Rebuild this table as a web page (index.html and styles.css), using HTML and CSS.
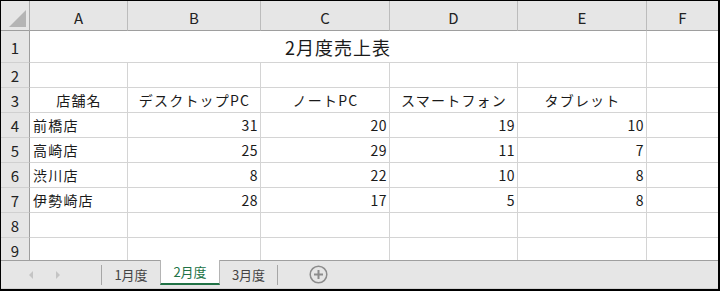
FILE: index.html
```html
<!DOCTYPE html>
<html lang="ja">
<head>
  <meta charset="UTF-8" />
  <title>2月度売上表</title>
  <link rel="stylesheet" href="styles.css">
</head>
<body>

<div class="book">

  <!-- Sheet grid -->
  <div class="sheet">
    <div class="corner">
      <svg width="17" height="17" viewBox="0 0 17 17"><polygon points="17,0 17,17 0,17" fill="#b4b4b4"/></svg>
    </div>
    <div class="col-head">A</div>
    <div class="col-head">B</div>
    <div class="col-head">C</div>
    <div class="col-head">D</div>
    <div class="col-head">E</div>
    <div class="col-head">F</div>

    <div class="row-head">1</div>
    <div class="cell title">2月度売上表</div>
    <div class="cell"></div>

    <div class="row-head">2</div>
    <div class="cell"></div><div class="cell"></div><div class="cell"></div>
    <div class="cell"></div><div class="cell"></div><div class="cell"></div>

    <div class="row-head">3</div>
    <div class="cell center">店舗名</div>
    <div class="cell center">デスクトップPC</div>
    <div class="cell center">ノートPC</div>
    <div class="cell center">スマートフォン</div>
    <div class="cell center">タブレット</div>
    <div class="cell"></div>

    <div class="row-head">4</div>
    <div class="cell">前橋店</div>
    <div class="cell num">31</div>
    <div class="cell num">20</div>
    <div class="cell num">19</div>
    <div class="cell num">10</div>
    <div class="cell"></div>

    <div class="row-head">5</div>
    <div class="cell">高崎店</div>
    <div class="cell num">25</div>
    <div class="cell num">29</div>
    <div class="cell num">11</div>
    <div class="cell num">7</div>
    <div class="cell"></div>

    <div class="row-head">6</div>
    <div class="cell">渋川店</div>
    <div class="cell num">8</div>
    <div class="cell num">22</div>
    <div class="cell num">10</div>
    <div class="cell num">8</div>
    <div class="cell"></div>

    <div class="row-head">7</div>
    <div class="cell">伊勢崎店</div>
    <div class="cell num">28</div>
    <div class="cell num">17</div>
    <div class="cell num">5</div>
    <div class="cell num">8</div>
    <div class="cell"></div>

    <div class="row-head">8</div>
    <div class="cell"></div><div class="cell"></div><div class="cell"></div>
    <div class="cell"></div><div class="cell"></div><div class="cell"></div>

    <div class="row-head">9</div>
    <div class="cell"></div><div class="cell"></div><div class="cell"></div>
    <div class="cell"></div><div class="cell"></div><div class="cell"></div>
  </div>

  <!-- Sheet tabs -->
  <div class="tabs">
    <div class="nav">
      <span class="arrow left"></span>
      <span class="arrow right"></span>
    </div>
    <div class="sep"></div>
    <div class="tab">1月度</div>
    <div class="tab active">2月度</div>
    <div class="tab">3月度</div>
    <div class="sep"></div>
    <div class="add">
      <svg width="19" height="19" viewBox="0 0 19 19">
        <circle cx="9.5" cy="9.5" r="8.3" fill="none" stroke="#8c8c8c" stroke-width="1.5"/>
        <path d="M9.5 5v9M5 9.5h9" stroke="#8c8c8c" stroke-width="2"/>
      </svg>
    </div>
  </div>

</div>

</body>
</html>
```

FILE: styles.css
```css
* { margin: 0; padding: 0; box-sizing: border-box; }

body {
  background: #fff;
  font-family: "Noto Sans CJK JP", "Noto Sans", sans-serif;
  color: #1a1a1a;
}

.book {
  width: 720px;
  height: 291px;
  border-top: 1px solid #000;
  border-left: 1px solid #000;
  border-right: 2px solid #000;
  border-bottom: 2px solid #000;
  display: flex;
  flex-direction: column;
  overflow: hidden;
}

/* grid */
.sheet {
  display: grid;
  grid-template-columns: 29px 98px 133px 129px 128px 129px 72px;
  grid-template-rows: 30px 32px repeat(8, 25px);
  height: 259px;
  overflow: hidden;
  flex-shrink: 0;
}

.corner,
.col-head,
.row-head {
  background: #e6e6e6;
  color: #222;
  font-size: 15px;
  display: flex;
  align-items: center;
  justify-content: center;
}

.corner {
  border-right: 1px solid #ababab;
  border-bottom: 1px solid #9e9e9e;
  align-items: flex-end;
  justify-content: flex-end;
  padding: 0 3px 3px 0;
}

.corner svg { display: block; }

.col-head {
  border-right: 1px solid #bcbcbc;
  border-bottom: 1px solid #9e9e9e;
  padding-top: 3px;
}

.row-head {
  border-right: 1px solid #9e9e9e;
  border-bottom: 1px solid #d0d0d0;
  padding-top: 1px;
}

.cell {
  border-right: 1px solid #d4d4d4;
  border-bottom: 1px solid #d4d4d4;
  font-size: 14px;
  line-height: 1;
  letter-spacing: 1.2px;
  display: flex;
  align-items: center;
  padding: 0 3px;
  white-space: nowrap;
  overflow: hidden;
}

.cell.center { justify-content: center; padding-left: 4px; }
.cell.num { justify-content: flex-end; letter-spacing: 0.5px; padding-right: 2px; }

.cell.title {
  grid-column: span 5;
  justify-content: center;
  font-size: 18px;
  letter-spacing: 1px;
  padding-top: 1px;
}

/* tab bar */
.tabs {
  height: 29px;
  display: flex;
  align-items: stretch;
  background: #e6e6e6;
  border-top: 1px solid #9f9f9f;
  border-bottom: 1px solid #d2d2d2;
  font-size: 13px;
  color: #444;
}

.nav {
  width: 100px;
  display: flex;
  align-items: center;
  gap: 23px;
  padding-left: 28px;
}

.arrow {
  width: 0;
  height: 0;
  border-top: 4px solid transparent;
  border-bottom: 4px solid transparent;
}

.arrow.left { border-right: 4px solid #c4c4c4; }
.arrow.right { border-left: 4px solid #c4c4c4; }

.sep {
  width: 1px;
  height: 20px;
  align-self: center;
  background: #a6a6a6;
}

.tab {
  width: 58px;
  display: flex;
  align-items: center;
  justify-content: center;
  padding-bottom: 1px;
}

.tab.active {
  width: 60px;
  margin-top: -1px;
  height: 25px;
  background: #fff;
  color: #217346;
  border-left: 1px solid #b4b4b4;
  border-right: 1px solid #b4b4b4;
  border-bottom: 2px solid #217346;
  padding-bottom: 0;
}

.tab.active + .tab { width: 57px; }

.add {
  margin-left: 31px;
  display: flex;
  align-items: center;
}

.add svg { display: block; }
```
